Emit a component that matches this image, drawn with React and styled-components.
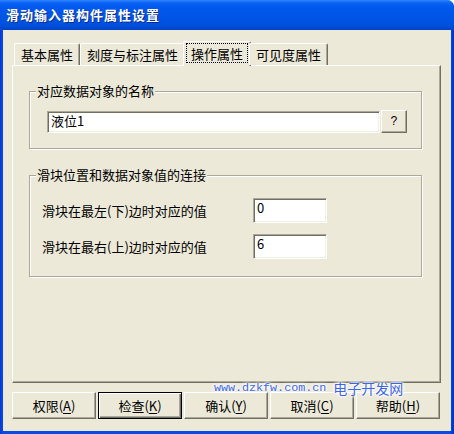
import React from "react";
import styled, { createGlobalStyle } from "styled-components";

const GlobalStyle = createGlobalStyle`
  html, body {
    margin: 0;
    padding: 0;
    background: #ffffff;
    overflow: hidden;
  }
  * {
    box-sizing: border-box;
  }
`;

const FONT = `"Noto Sans CJK SC", "Liberation Sans", sans-serif`;
const FACE = "#ECE9D8";

const Frame = styled.div`
  position: relative;
  width: 454px;
  height: 434px;
  display: flex;
  flex-direction: column;
  background: linear-gradient(to right, #0838D8 0, #0A4BE8 3px, #0A4BE8 450px, #0030C8 100%);
  border-radius: 0 7px 0 0;
  overflow: hidden;
  font-family: ${FONT};
  font-size: 13px;
  color: #000;
`;

const TitleBar = styled.div`
  height: 30px;
  flex: none;
  display: flex;
  align-items: center;
  padding-left: 6px;
  background: linear-gradient(to bottom, #2E86FF 0, #0B62F4 3px, #0058EE 7px, #0055E6 50%, #0050DE 85%, #0043C4 100%);
  color: #fff;
  font-weight: bold;
  font-size: 13px;
  letter-spacing: 1px;
  line-height: 16px;
  text-shadow: 1px 1px 0 #0A2A8A;
`;

const Client = styled.div`
  flex: 1;
  margin: 0 3px 3px 3px;
  background: ${FACE};
  display: flex;
  flex-direction: column;
  padding: 11px 11px 12px 9px;
`;

const TabRow = styled.div`
  display: flex;
  align-items: flex-end;
  padding-left: 2px;
  position: relative;
  z-index: 1;
`;

const Tab = styled.div`
  height: ${({ $active }) => ($active ? 25 : 22)}px;
  margin: ${({ $active }) => ($active ? "0 -2px -1px" : "0")};
  padding: 0 ${({ $active }) => ($active ? 2 : 5)}px;
  display: flex;
  align-items: center;
  justify-content: center;
  background: ${FACE};
  border-top: 1px solid #fff;
  border-left: 1px solid #fff;
  border-right: 1px solid #716F64;
  border-radius: 2px 2px 0 0;
  box-shadow: inset -1px 0 0 #ACA899;
  line-height: 15px;
  white-space: nowrap;
`;

const TabFocus = styled.span`
  display: block;
  padding: 2px 4px 1px;
  margin-top: -2px;
  border: 1px dotted #000;
`;

const TabLabel = styled.span`
  display: block;
  padding: 0 1px;
`;

const Panel = styled.div`
  height: 318px;
  flex: none;
  margin-right: -1px;
  background: ${FACE};
  border-top: 1px solid #fff;
  border-left: 1px solid #fff;
  border-right: 1px solid #716F64;
  border-bottom: 1px solid #716F64;
  box-shadow: inset -1px -1px 0 #ACA899;
  padding: 25px 18px 0 16px;
`;

const Group = styled.div`
  position: relative;
  height: ${({ $h }) => $h}px;
  margin-bottom: 26px;
  border: 1px solid #ACA899;
  box-shadow: inset 1px 1px 0 #fff, 1px 1px 0 #fff;
  padding: ${({ $pad }) => $pad};
`;

const GroupTitle = styled.span`
  position: absolute;
  top: -9px;
  left: 6px;
  padding: 0 1px;
  background: ${FACE};
  line-height: 16px;
`;

const NameRow = styled.div`
  display: flex;
  align-items: flex-start;
  gap: 1px;
`;

const TextBox = styled.div`
  height: ${({ $h }) => $h || 22}px;
  width: ${({ $w }) => ($w ? `${$w}px` : "auto")};
  flex: ${({ $w }) => ($w ? "none" : "1")};
  margin-top: ${({ $mt }) => $mt || 0}px;
  background: #fff;
  border-top: 1px solid #ACA899;
  border-left: 1px solid #ACA899;
  border-right: 1px solid #fff;
  border-bottom: 1px solid #fff;
  box-shadow: inset 1px 1px 0 #716F64, inset -1px -1px 0 #F1EFE2;
  padding: 1px 3px 0;
  display: flex;
  align-items: ${({ $top }) => ($top ? "flex-start" : "center")};
  line-height: 16px;
  white-space: nowrap;
`;

const SmallButton = styled.div`
  width: 26px;
  height: 23px;
  flex: none;
  display: flex;
  align-items: center;
  justify-content: center;
  background: ${FACE};
  border-top: 1px solid #fff;
  border-left: 1px solid #fff;
  border-right: 1px solid #716F64;
  border-bottom: 1px solid #716F64;
  box-shadow: inset -1px -1px 0 #ACA899;
  font-family: "Liberation Mono", monospace;
  font-size: 12px;
`;

const ValueGrid = styled.div`
  display: grid;
  grid-template-columns: 211px 74px;
  row-gap: 11px;
  align-items: center;
`;

const RowLabel = styled.span`
  line-height: 16px;
  white-space: nowrap;
`;

const ButtonRow = styled.div`
  display: flex;
  gap: 2px;
  margin-top: 9px;
  margin-right: -1px;
`;

const Button = styled.div`
  width: 84px;
  height: 27px;
  display: flex;
  align-items: center;
  justify-content: center;
  background: ${FACE};
  border: 1px solid;
  border-color: ${({ $default }) => ($default ? "#000" : "#fff #716F64 #716F64 #fff")};
  box-shadow: ${({ $default }) =>
    $default
      ? "inset 1px 1px 0 #fff, inset -1px -1px 0 #716F64, inset -2px -2px 0 #ACA899"
      : "inset -1px -1px 0 #ACA899"};
  line-height: 16px;
  white-space: nowrap;

  u {
    text-underline-offset: 2px;
  }
`;

const Watermark = styled.div`
  position: absolute;
  left: 214px;
  top: 381px;
  display: flex;
  align-items: center;
  gap: 7px;
  color: #3C66EE;
  text-shadow: 0 0 2px #fff, 0 0 3px #fff, 0 0 4px #fff, 0 0 5px #fff;
  pointer-events: none;
`;

const WatermarkUrl = styled.span`
  font-family: "Liberation Mono", monospace;
  font-size: 11.7px;
  line-height: 14px;
`;

const WatermarkName = styled.span`
  font-family: ${FONT};
  font-size: 14px;
  line-height: 14px;
`;

const tabs = ["基本属性", "刻度与标注属性", "操作属性", "可见度属性"];

const buttons = [
  { text: "权限", key: "A" },
  { text: "检查", key: "K", isDefault: true },
  { text: "确认", key: "Y" },
  { text: "取消", key: "C" },
  { text: "帮助", key: "H" },
];

export default function App() {
  return (
    <>
      <GlobalStyle />
      <Frame>
        <TitleBar>滑动输入器构件属性设置</TitleBar>
        <Client>
          <TabRow>
            {tabs.map((t, i) => (
              <Tab key={t} $active={i === 2}>
                {i === 2 ? <TabFocus>{t}</TabFocus> : <TabLabel>{t}</TabLabel>}
              </Tab>
            ))}
          </TabRow>
          <Panel>
            <Group $h={58} $pad="18px 14px 0 17px">
              <GroupTitle>对应数据对象的名称</GroupTitle>
              <NameRow>
                <TextBox $mt={1} $top>液位1</TextBox>
                <SmallButton>?</SmallButton>
              </NameRow>
            </Group>
            <Group $h={102} $pad="22px 0 0 12px">
              <GroupTitle>滑块位置和数据对象值的连接</GroupTitle>
              <ValueGrid>
                <RowLabel>滑块在最左(下)边时对应的值</RowLabel>
                <TextBox $w={74} $h={25} $top>0</TextBox>
                <RowLabel>滑块在最右(上)边时对应的值</RowLabel>
                <TextBox $w={74} $h={25} $top>6</TextBox>
              </ValueGrid>
            </Group>
          </Panel>
          <ButtonRow>
            {buttons.map((b) => (
              <Button key={b.key} $default={b.isDefault}>
                {b.text}(<u>{b.key}</u>)
              </Button>
            ))}
          </ButtonRow>
        </Client>
        <Watermark>
          <WatermarkUrl>www.dzkfw.com.cn</WatermarkUrl>
          <WatermarkName>电子开发网</WatermarkName>
        </Watermark>
      </Frame>
    </>
  );
}
